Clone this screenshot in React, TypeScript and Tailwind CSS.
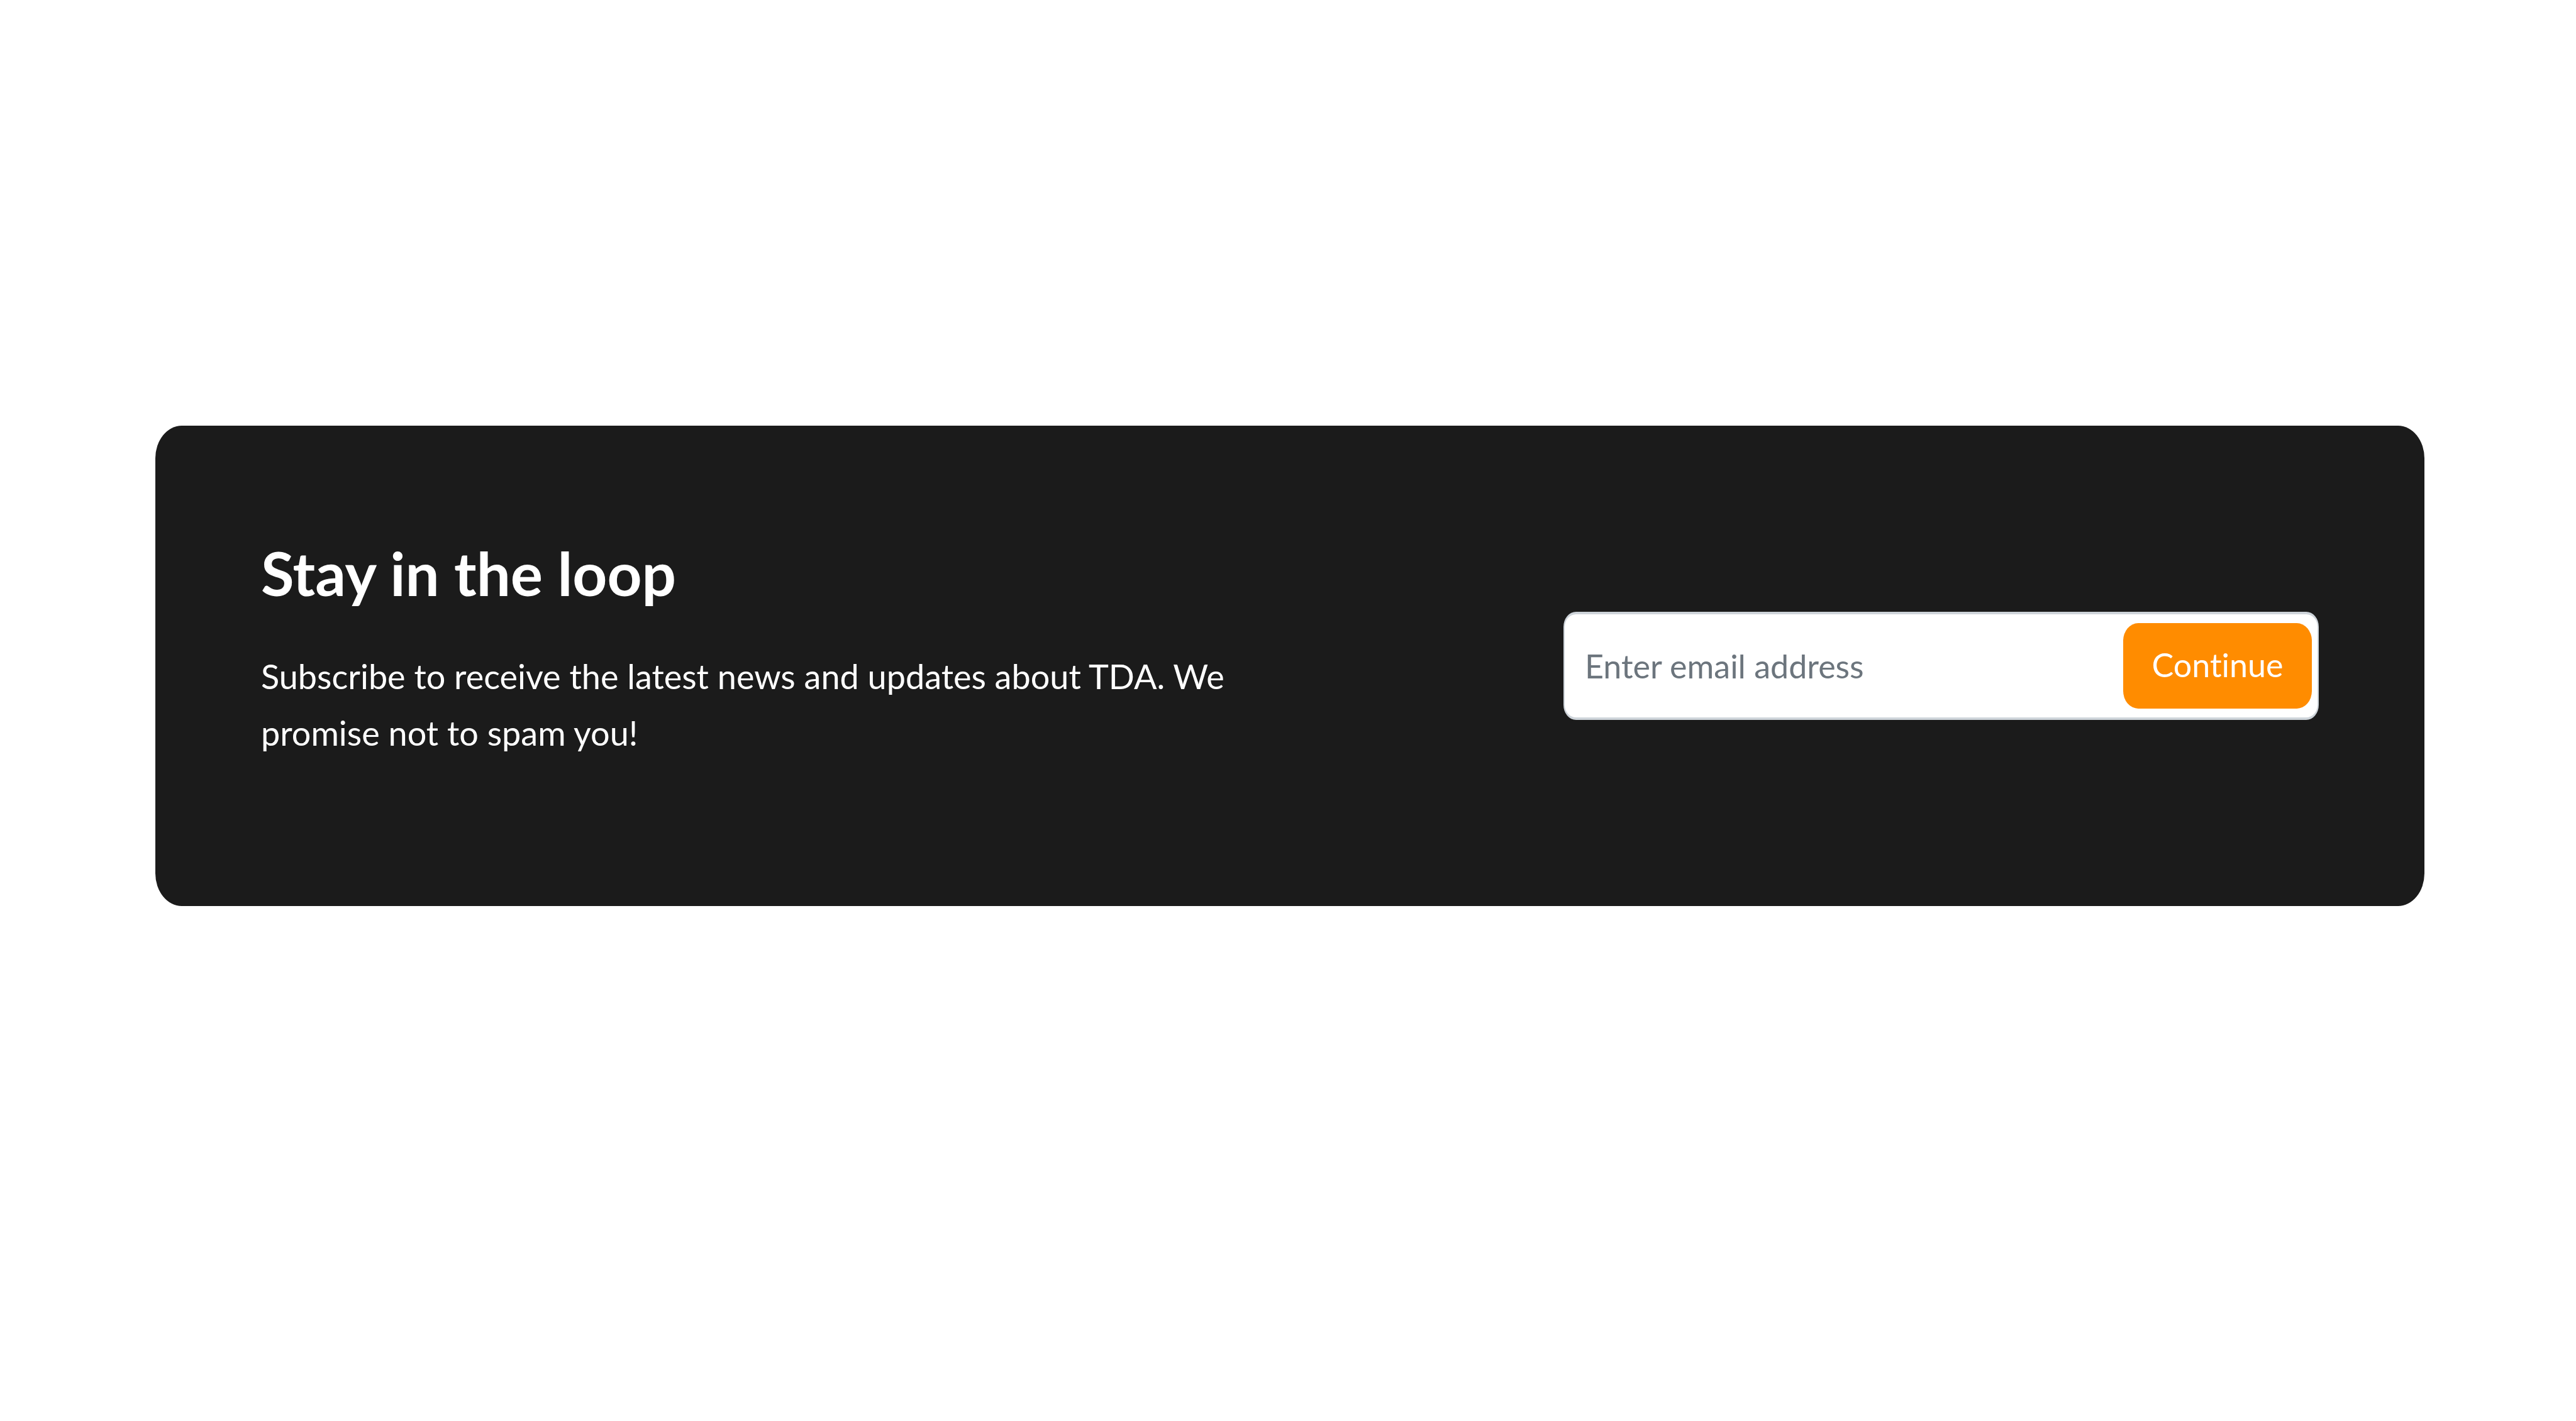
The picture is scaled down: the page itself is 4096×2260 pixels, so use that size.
export default function App() {
  return (
    <main className="flex min-h-screen w-full items-start bg-white pt-[677px] pr-[241px] pl-[247px] font-[Lato,sans-serif] [font-variant-ligatures:none]">
      <section className="flex w-full items-center justify-between gap-12 rounded-[42px/52px] bg-[#1b1b1b] px-[168px] py-[168px] text-white">
        <div className="max-w-[1600px] flex-1">
          <h2 className="text-[96px] leading-[132px] font-bold">Stay in the loop</h2>
          <p className="mt-[54px] mb-[62px] text-[54px] leading-[90px]">
            Subscribe to receive the latest news and updates about TDA. We promise not to spam you!
          </p>
        </div>
        <form className="flex w-[1201px] items-center rounded-[20px/24px] border-x-2 border-y-4 border-[#ced4da] bg-white py-[14px] pr-[9px] pl-[32px]">
          <input
            aria-label="Email address"
            type="email"
            placeholder="Enter email address"
            className="min-w-0 flex-1 text-[52px] text-[#212529] outline-none placeholder:text-[#6c757d]"
          />
          <button type="button" className="h-[136px] w-[300px] rounded-[24px/28px] bg-[#ff8c00] pb-[4px] text-[52px]">
            Continue
          </button>
        </form>
      </section>
    </main>
  );
}
